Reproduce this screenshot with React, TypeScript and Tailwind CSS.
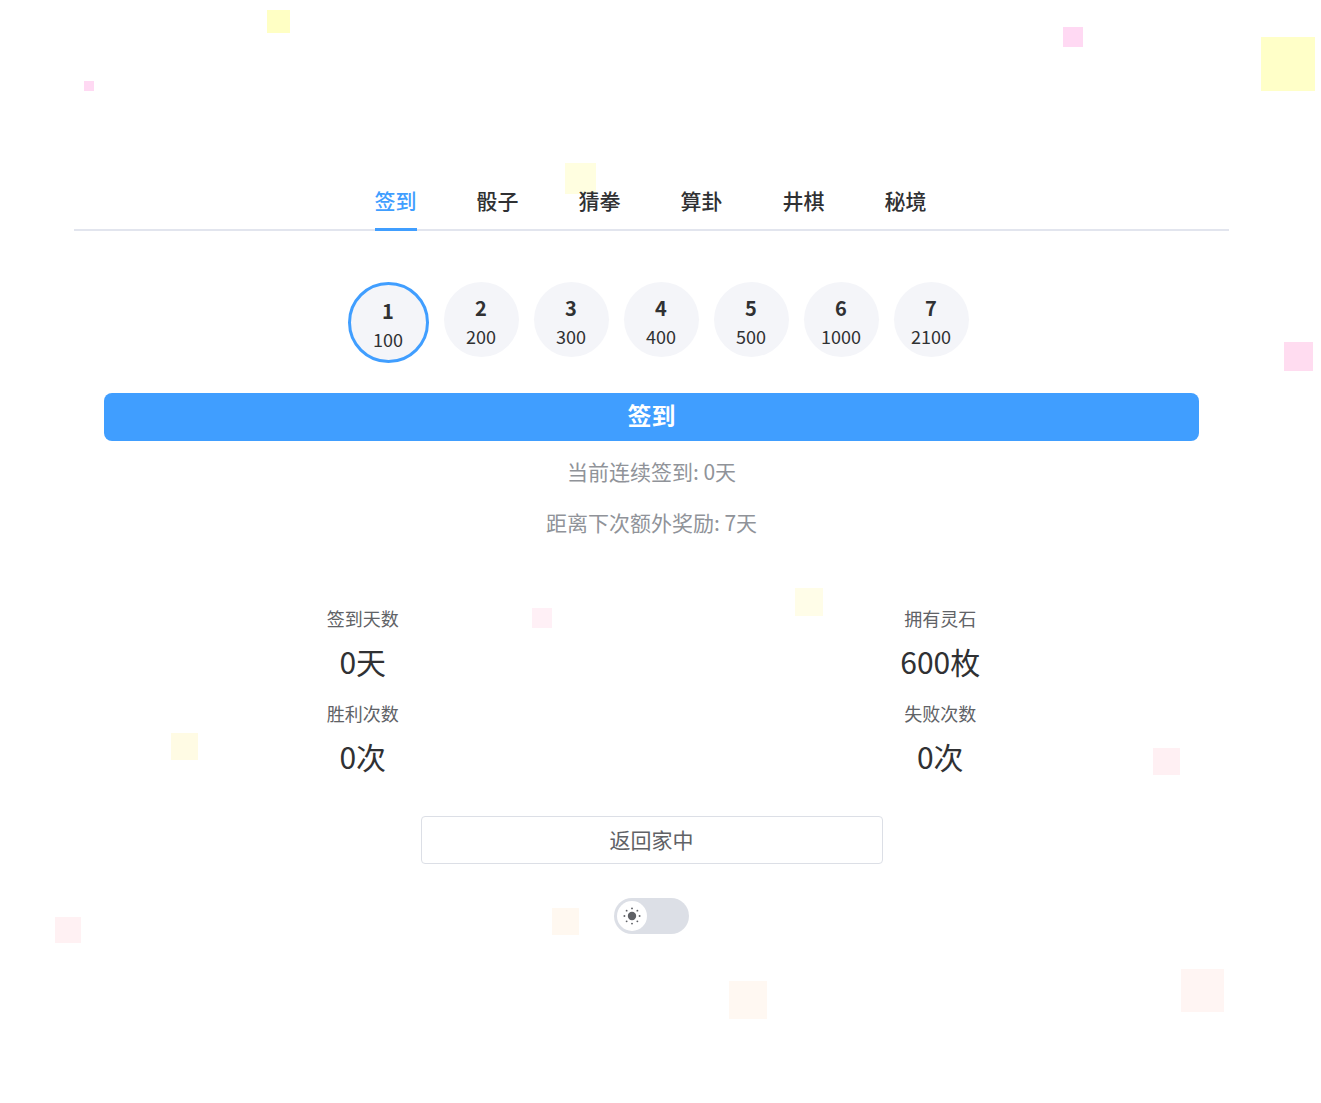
import React from 'react';

const tabs = ['签到', '骰子', '猜拳', '算卦', '井棋', '秘境'];

const rewards = [
  { day: 1, value: 100 },
  { day: 2, value: 200 },
  { day: 3, value: 300 },
  { day: 4, value: 400 },
  { day: 5, value: 500 },
  { day: 6, value: 1000 },
  { day: 7, value: 2100 },
];

const SunIcon: React.FC = () => (
  <svg width="20" height="20" viewBox="0 0 20 20">
    <circle cx="10" cy="10" r="4.2" fill="#5f6166" />
    {[0, 45, 90, 135, 180, 225, 270, 315].map((a) => {
      const r = (a * Math.PI) / 180;
      return <circle key={a} cx={10 + 7.6 * Math.cos(r)} cy={10 + 7.6 * Math.sin(r)} r="0.95" fill="#5f6166" />;
    })}
  </svg>
);

export default function App() {
  return (
    <div className="relative min-h-screen w-full overflow-hidden bg-white font-['Noto_Sans_CJK_SC','Noto_Sans',sans-serif]">
      {/* floating squares */}
      <div className="absolute left-[267px] top-[10px] h-[23px] w-[23px] bg-[#ffffc4]" />
      <div className="absolute left-[84px] top-[81px] h-[10px] w-[10px] bg-[#ffd9f3]" />
      <div className="absolute left-[1063px] top-[27px] h-[20px] w-[20px] bg-[#ffd9f3]" />
      <div className="absolute left-[1261px] top-[37px] h-[54px] w-[54px] bg-[#ffffc8]" />
      <div className="absolute left-[565px] top-[163px] h-[31px] w-[31px] bg-[#fffee0]" />
      <div className="absolute left-[1284px] top-[342px] h-[29px] w-[29px] bg-[#ffdcf0]" />
      <div className="absolute left-[532px] top-[608px] h-[20px] w-[20px] bg-[#fff0f6]" />
      <div className="absolute left-[795px] top-[588px] h-[28px] w-[28px] bg-[#fffde8]" />
      <div className="absolute left-[171px] top-[733px] h-[27px] w-[27px] bg-[#fffbe4]" />
      <div className="absolute left-[1153px] top-[748px] h-[27px] w-[27px] bg-[#fff0f3]" />
      <div className="absolute left-[55px] top-[917px] h-[26px] w-[26px] bg-[#fff1f3]" />
      <div className="absolute left-[552px] top-[908px] h-[27px] w-[27px] bg-[#fff8f0]" />
      <div className="absolute left-[729px] top-[981px] h-[38px] w-[38px] bg-[#fff8f2]" />
      <div className="absolute left-[1181px] top-[969px] h-[43px] w-[43px] bg-[#fff5f3]" />

      <div className="relative w-[1303px] px-[74px] pt-[186px] pb-[120px]">
        {/* Tabs */}
        <div className="relative flex justify-center gap-[60px] border-b-2 border-[#e2e5ee] pr-[2px]">
          {tabs.map((t, i) => (
            <div
              key={t}
              className={`relative pb-[15px] text-[21px] font-medium leading-[28px] ${i === 0 ? 'text-[#409eff]' : 'text-[#303133]'}`}
            >
              {t}
              {i === 0 && <div className="absolute -bottom-[2px] left-0 right-0 h-[3px] bg-[#409eff]" />}
            </div>
          ))}
        </div>

        {/* Reward circles */}
        <div className="mt-[51px] flex items-start justify-center gap-[15px] pl-[13px]">
          {rewards.map((r, i) => (
            <div
              key={r.day}
              className={`flex flex-col items-center justify-center rounded-full bg-[#f4f5f9] text-[#303133] ${
                i === 0 ? 'h-[81px] w-[81px] border-[3px] border-[#409eff]' : 'h-[75px] w-[75px]'
              }`}
            >
              <div className="flex flex-col items-center pt-[5px]">
                <div className="text-[20px] font-bold leading-[24px]">{r.day}</div>
                <div className="mt-[4px] text-[18px] leading-[24px]">{r.value}</div>
              </div>
            </div>
          ))}
        </div>

        {/* Sign button */}
        <button className="mx-[30px] mt-[30px] flex h-[48px] w-[1095px] items-center justify-center rounded-[8px] bg-[#409eff] pb-[4px] text-[24px] font-bold text-white">
          签到
        </button>

        <div className="mt-[16px] text-center text-[21px] leading-[28px] text-[#909399]">当前连续签到: 0天</div>
        <div className="mt-[23px] text-center text-[21px] leading-[28px] text-[#909399]">距离下次额外奖励: 7天</div>

        {/* Stats */}
        <div className="mt-[69px] grid grid-cols-2 gap-y-[19px]">
          {[
            ['签到天数', '0天'],
            ['拥有灵石', '600枚'],
            ['胜利次数', '0次'],
            ['失败次数', '0次'],
          ].map(([label, value]) => (
            <div key={label} className="flex flex-col items-center">
              <div className="text-[18px] leading-[26px] text-[#606266]">{label}</div>
              <div className="mt-[10px] text-[30px] leading-[40px] text-[#303133]">{value}</div>
            </div>
          ))}
        </div>

        {/* Return */}
        <div className="mt-[40px] flex justify-center">
          <button className="flex h-[48px] w-[462px] items-center justify-center rounded-[4px] border border-[#dcdfe6] bg-white text-[21px] text-[#606266]">
            返回家中
          </button>
        </div>

        {/* Theme toggle */}
        <div className="mt-[34px] flex justify-center">
          <div className="flex h-[36px] w-[75px] items-center rounded-full bg-[#dcdfe6] p-[3px]">
            <div className="flex h-[30px] w-[30px] items-center justify-center rounded-full bg-white">
              <SunIcon />
            </div>
          </div>
        </div>
      </div>
    </div>
  );
}
